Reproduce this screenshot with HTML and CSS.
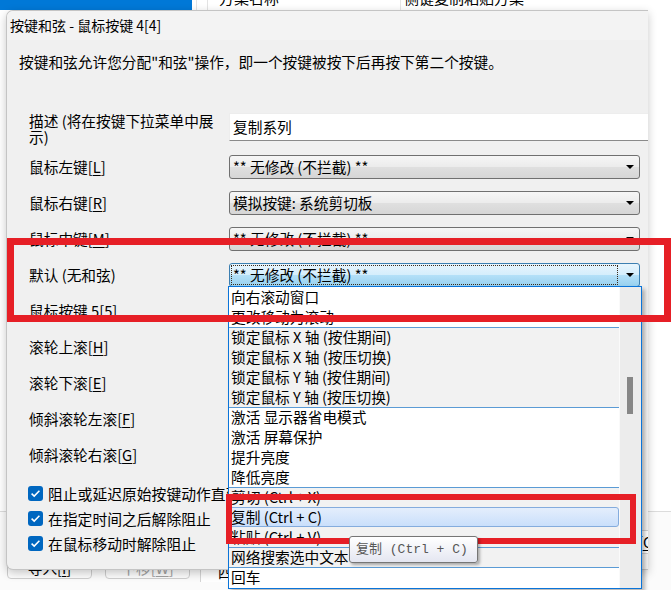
FILE: index.html
```html
<!DOCTYPE html>
<html>
<head>
  <title>按键和弦</title>
  <link rel="stylesheet" href="styles.css">
</head>
<body>
  <div class="desk">
    <div class="bgwin">
      <div class="bg-head">
        <div class="bg-sel"></div>
        <div class="bg-split"></div>
        <div class="bg-col c1">方案名称</div>
        <div class="bg-col c2">侧键复制粘贴方案</div>
      </div>
      <div class="bg-mid"></div>
      <div class="bg-foot">
        <div class="bg-btn">导入[<u>I</u>]</div>
        <div class="bg-btn dis">下移[<u>W</u>]</div>
        <div class="bg-panel">四</div>
      </div>
    </div>

    <div class="dialog">
      <div class="title">按键和弦 - 鼠标按键 4[4]</div>
      <div class="intro">按键和弦允许您分配&quot;和弦&quot;操作，即一个按键被按下后再按下第二个按键。</div>

      <div class="form">
        <div class="row tall">
          <div class="lbl">描述 (将在按键下拉菜单中展示)</div>
          <div class="field">复制系列</div>
        </div>
        <div class="row">
          <div class="lbl">鼠标左键[<u>L</u>]</div>
          <div class="combo"><span class="txt">** 无修改 (不拦截) **</span><span class="arrow"></span></div>
        </div>
        <div class="row">
          <div class="lbl">鼠标右键[<u>R</u>]</div>
          <div class="combo"><span class="txt">模拟按键: 系统剪切板</span><span class="arrow"></span></div>
        </div>
        <div class="row">
          <div class="lbl">鼠标中键[<u>M</u>]</div>
          <div class="combo"><span class="txt">** 无修改 (不拦截) **</span><span class="arrow"></span></div>
        </div>
        <div class="row">
          <div class="lbl">默认 (无和弦)</div>
          <div class="combo focus"><span class="txt ring">** 无修改 (不拦截) **</span><span class="arrow"></span></div>
        </div>
        <div class="row">
          <div class="lbl">鼠标按键 5[<u>5</u>]</div>
          <div class="combo"><span class="txt">** 无修改 (不拦截) **</span><span class="arrow"></span></div>
        </div>
        <div class="row">
          <div class="lbl">滚轮上滚[<u>H</u>]</div>
          <div class="combo"><span class="txt">** 无修改 (不拦截) **</span><span class="arrow"></span></div>
        </div>
        <div class="row">
          <div class="lbl">滚轮下滚[<u>E</u>]</div>
          <div class="combo"><span class="txt">** 无修改 (不拦截) **</span><span class="arrow"></span></div>
        </div>
        <div class="row">
          <div class="lbl">倾斜滚轮左滚[<u>F</u>]</div>
          <div class="combo"><span class="txt">** 无修改 (不拦截) **</span><span class="arrow"></span></div>
        </div>
        <div class="row">
          <div class="lbl">倾斜滚轮右滚[<u>G</u>]</div>
          <div class="combo"><span class="txt">** 无修改 (不拦截) **</span><span class="arrow"></span></div>
        </div>
      </div>

      <div class="checks-wrap">
        <div class="checks">
          <div class="check"><span class="box"><svg width="15" height="15" viewBox="0 0 15 15"><path d="M3.6 7.6l2.6 2.5 5.2-5.4" fill="none" stroke="#fff" stroke-width="1.5"/></svg></span>阻止或延迟原始按键动作直到松开</div>
          <div class="check"><span class="box"><svg width="15" height="15" viewBox="0 0 15 15"><path d="M3.6 7.6l2.6 2.5 5.2-5.4" fill="none" stroke="#fff" stroke-width="1.5"/></svg></span>在指定时间之后解除阻止</div>
          <div class="check"><span class="box"><svg width="15" height="15" viewBox="0 0 15 15"><path d="M3.6 7.6l2.6 2.5 5.2-5.4" fill="none" stroke="#fff" stroke-width="1.5"/></svg></span>在鼠标移动时解除阻止</div>
        </div>
        <div class="side-btn">复制[<u>C</u>]</div>
      </div>
    </div>

    <!-- open dropdown of the focused combo, it hangs below the dialog -->
    <div class="droplist">
      <div class="items">
        <div class="grp">
          <div class="item">向右滚动窗口</div>
          <div class="item">更改移动为滚动</div>
        </div>
        <div class="grp alt">
          <div class="item">锁定鼠标 X 轴 (按住期间)</div>
          <div class="item">锁定鼠标 X 轴 (按压切换)</div>
          <div class="item">锁定鼠标 Y 轴 (按住期间)</div>
          <div class="item">锁定鼠标 Y 轴 (按压切换)</div>
        </div>
        <div class="grp">
          <div class="item">激活 显示器省电模式</div>
          <div class="item">激活 屏幕保护</div>
          <div class="item">提升亮度</div>
          <div class="item">降低亮度</div>
        </div>
        <div class="grp alt">
          <div class="item">剪切 (Ctrl + X)</div>
          <div class="item hot">复制 (Ctrl + C)</div>
          <div class="item">粘贴 (Ctrl + V)</div>
        </div>
        <div class="grp alt">
          <div class="item">网络搜索选中文本</div>
        </div>
        <div class="grp">
          <div class="item">回车</div>
          <div class="item">空格</div>
        </div>
      </div>
      <div class="vscroll"><div class="thumb"></div></div>
    </div>

    <div class="mark mark-a"></div>
    <div class="mark mark-b"></div>
    <div class="tip">复制 (Ctrl + C)</div>
  </div>
</body>
</html>
```

FILE: styles.css
```css
* {
  box-sizing: border-box;
}

body {
  margin: 0;
  background: #ffffff;
  font-family: "Noto Sans CJK SC", sans-serif;
  font-size: 14.7px;
  color: #000;
}

u {
  text-underline-offset: 2px;
}

.desk {
  position: relative;
  width: 671px;
  height: 590px;
  overflow: hidden;
}

/* window behind the dialog */
.bgwin {
  display: flex;
  flex-direction: column;
  height: 590px;
  background: #fbfbfb;
}

.bg-head {
  display: flex;
  height: 10px;
  overflow: hidden;
  background: #fff;
}

.bg-sel {
  width: 192px;
  background: #0078d7;
}

.bg-split {
  width: 12px;
  margin-left: 4px;
  border-left: 1px solid #e3e3e3;
  border-right: 1px solid #e3e3e3;
}

.bg-col {
  font-size: 15px;
  line-height: 20px;
  margin-top: -12px;
}

.c1 {
  width: 192px;
  padding-left: 11px;
}

.c2 {
  border-left: 1px solid #e5e5e5;
  padding-left: 3px;
}

.bg-mid {
  height: 502px;
  border-bottom: 1px solid #dcdcdc;
  background: #fff;
}

.bg-foot {
  display: flex;
  padding: 45px 0 0 7px;
}

.bg-btn {
  width: 85px;
  height: 22px;
  margin-right: 13px;
  border: 1px solid #cfcfcf;
  border-radius: 4px;
  background: #fdfdfd;
  line-height: 20px;
  text-align: center;
}

.bg-btn.dis {
  color: #a2a2a2;
}

.bg-panel {
  margin-left: -3px;
  margin-top: -45px;
  padding: 50px 0 0 17px;
  border-left: 1px solid #d5d5d5;
  background: #fff;
  width: 300px;
  line-height: 20px;
}

/* dialog */
.dialog {
  position: absolute;
  left: 6px;
  top: 10px;
  width: 642px;
  height: 560px;
  background: #f0f0f0;
  border: 1px solid #c4c4c4;
  border-right: none;
  border-radius: 7px 0 0 7px;
  box-shadow: 0 3px 10px rgba(0, 0, 0, 0.22);
  overflow: hidden;
}

.title {
  height: 29px;
  line-height: 29px;
  padding-left: 3px;
  background: #f3f3f3;
  font-size: 14px;
}

.intro {
  padding: 12px 0 0 12px;
  line-height: 20px;
}

.form {
  margin-top: 31px;
  padding-left: 22px;
}

.row {
  display: grid;
  grid-template-columns: 200px 1fr;
  align-items: center;
  height: 36px;
}

.row.tall {
  height: 46px;
  align-items: start;
}

.lbl {
  padding-right: 10px;
  line-height: 20px;
}

.tall .lbl {
  padding-top: 10px;
  line-height: 16px;
}

.field {
  margin-top: 10px;
  height: 28px;
  padding-left: 3px;
  line-height: 26px;
  background: #fff;
  border: 1px solid #ededed;
  border-bottom-color: #8a8a8a;
  border-right: none;
}

.combo {
  display: flex;
  align-items: center;
  width: 411px;
  height: 24px;
  padding: 0 5px 0 3px;
  border: 1px solid #707070;
  border-radius: 3px;
  background: linear-gradient(#f6f6f6, #ececec 48%, #dfdfdf 52%, #d6d6d6);
  line-height: 20px;
}

.combo .txt {
  flex: 1;
}

.arrow {
  width: 0;
  height: 0;
  border-left: 4px solid transparent;
  border-right: 4px solid transparent;
  border-top: 4px solid #000;
  margin-left: 8px;
}

.combo.focus {
  padding-left: 1px;
  border-color: #3c7fb1;
  background: linear-gradient(#e8f5fd, #d5eefc 48%, #b3e0f8 52%, #98d1ef);
}

.txt.ring {
  height: 20px;
  padding-left: 1px;
  border: 1px dotted #3a2a1a;
  line-height: 18px;
}

.checks-wrap {
  display: flex;
  margin-top: 8px;
}

.checks {
  padding-left: 21px;
}

.check {
  display: flex;
  align-items: center;
  height: 25px;
  font-size: 14.8px;
  white-space: nowrap;
}

.box {
  display: flex;
  width: 15px;
  height: 15px;
  margin-right: 5px;
  border-radius: 3px;
  background: #0067c0;
}

.side-btn {
  align-self: flex-end;
  margin: 0 -40px 2px auto;
  width: 110px;
  height: 24px;
  border: 1px solid #cfcfcf;
  border-radius: 3px;
  background: #fdfdfd;
  line-height: 22px;
  text-align: center;
}

/* open drop list */
.droplist {
  position: absolute;
  left: 228px;
  top: 286px;
  width: 414px;
  height: 303px;
  display: flex;
  border: 1px solid #0a74d9;
  background: #fff;
  box-shadow: 3px 3px 4px rgba(0, 0, 0, 0.28);
  overflow: hidden;
}

.items {
  width: 390px;
}

.grp + .grp {
  box-shadow: inset 0 1px #5b9bd5;
}

.grp.alt {
  background: #f2f2f2;
}

.item {
  height: 20px;
  padding-left: 2px;
  line-height: 20px;
  white-space: nowrap;
}

.item.hot {
  padding-left: 1px;
  border: 1px solid #84acdd;
  border-radius: 3px;
  background: linear-gradient(#e4eefc, #c9dffb);
  line-height: 18px;
}

.vscroll {
  width: 22px;
  border-left: 1px solid #fafafa;
  background: #ececec;
  padding-top: 90px;
}

.thumb {
  width: 6px;
  height: 37px;
  margin-left: 7px;
  background: #868686;
}

/* annotation boxes */
.mark {
  position: absolute;
  border: 7px solid #e61f26;
}

.mark-a {
  left: 7px;
  top: 238px;
  width: 664px;
  height: 84px;
}

.mark-b {
  left: 226px;
  top: 494px;
  width: 410px;
  height: 50px;
  border-width: 6px;
}

.tip {
  position: absolute;
  left: 349px;
  top: 536px;
  width: 129px;
  height: 27px;
  padding-left: 6px;
  border: 1px solid #767676;
  border-radius: 3px;
  background: linear-gradient(#ffffff, #e4e6f1);
  box-shadow: 2px 2px 3px rgba(0, 0, 0, 0.3);
  font-family: "Liberation Mono", "Noto Sans CJK SC", monospace;
  font-size: 13px;
  line-height: 25px;
  color: #575757;
}
```
